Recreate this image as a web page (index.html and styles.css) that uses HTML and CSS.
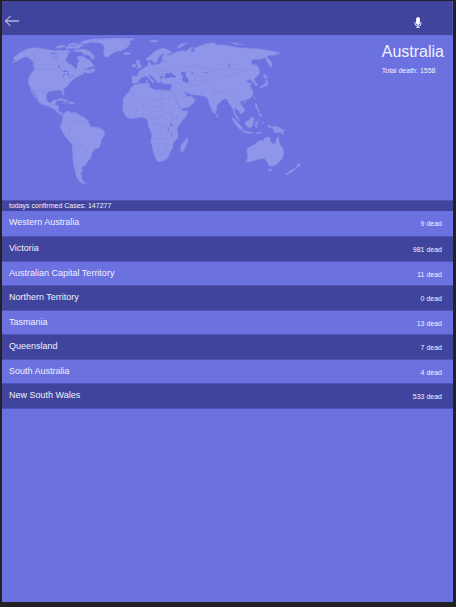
FILE: index.html
```html
<!DOCTYPE html>
<html lang="en">
<head>
<meta charset="utf-8">
<meta name="viewport" content="width=device-width, initial-scale=1">
<title>Australia</title>
<link rel="stylesheet" href="styles.css">
</head>
<body>
<div class="app">
  <header class="topbar">
    <a class="back" href="#" aria-label="Back">
      <svg width="16" height="12" viewBox="0 0 16 12"><path d="M15 6H1.500M6.500 1 1.500 6l5 5"/></svg>
    </a>
    <button class="mic" type="button" aria-label="Voice search">
      <svg width="8" height="12" viewBox="0 0 8 12"><rect class="mic-body" x="2.500" y="0.500" width="3" height="7" rx="1.500"/><path d="M1 5v1.200a3 3 0 0 0 6 0V5M4 9v2M2.500 10.500h3"/></svg>
    </button>
  </header>
  <main>
    <section class="hero">
      <svg class="map" viewBox="6 15 930 495" role="img" aria-label="World map">
        <g class="land">
          <!-- North America -->
          <path d="M40 82L52 74 62 66 85 56 100 53 130 56 150 60 165 62 180 60 195 64 205 72 200 84 204 100 222 108 228 120 232 110 232 100 240 86 238 78 250 80 262 88 270 92 276 100 283 108 270 112 255 116 250 122 262 118 266 120 283 122 280 127 264 130 256 126 248 132 236 138 226 144 214 152 207 162 198 172 190 178 192 196 187 192 184 180 165 182 150 184 142 188 138 200 141 214 148 219 156 217 160 211 170 210 168 218 163 224 176 228 174 240 180 247 190 250 184 255 174 249 166 240 156 234 146 229 130 225 118 218 112 206 104 190 97 176 100 190 107 204 101 198 94 184 92 174 86 164 85 150 90 136 98 124 104 118 100 108 100 96 92 88 80 80 66 84 52 92 36 98 46 90 40 86Z"/>
          <!-- Arctic islands -->
          <path d="M151 70l12-4 12 3 1 8-10 4-14-1-7-5zM168 50l16-5 14 2-12 6-17 2zM196 52l14-5 14 3-8 5-16 1zM187 63l12-3 13 3-6 5-15 1zM205 42l17-4 10 3-14 5-14 0zM219 51l11-7 14-2 9 3-10 4-8 6-13 1zM240 38l16-7 22-4 22-1-12 6-18 5-14 4zM220 61l16-3 18 0 14 5 8 8 8 8-3 9-10-2 1-7-12-5-9 0-4-8-14-1-14-2zM233 79l8 2 4 6-9 2-6-5zM270 119l9-4 6 4-1 5-10 1z"/>
          <!-- Caribbean -->
          <path d="M170 210l14-5 14 5 9 6-10-1-11-5-14 3zM206 217l9-1 10 4-9 2-10 0zM189 218l7 1-4 2z"/>
          <!-- Greenland and Iceland -->
          <path d="M290 28L320 26 350 24 404 26 388 34 390 42 380 54 362 62 346 66 332 74 322 82 312 78 310 66 314 56 308 42 296 38 276 38ZM371 69l9-2 9 1 4 3-8 3-12-1z"/>
          <!-- South America -->
          <path d="M188 256L196 246 206 243 212 248 228 248 238 256 252 262 264 272 268 282 272 290 290 292 306 298 315 306 312 318 304 330 301 346 296 354 284 358 276 368 272 384 262 396 258 404 250 408 244 412 248 420 242 428 244 438 246 450 252 456 260 461 248 460 238 454 230 442 226 426 220 400 218 370 216 342 206 332 194 316 186 302 180 292 184 280 188 270Z"/>
          <!-- Africa -->
          <path d="M403 164L419 161 441 160 450 162 448 172 462 178 472 182 477 178 493 181 512 182 524 204 532 220 541 236 549 243 564 242 560 256 548 270 536 286 531 298 534 312 533 324 522 336 518 342 517 356 510 366 504 382 495 391 480 395 471 394 466 382 459 362 456 346 452 334 456 318 452 302 444 288 444 272 436 264 420 261 405 265 391 266 379 260 370 245 368 233 370 218 369 208 378 194 388 184 392 174ZM562 323L564 334 557 348 551 364 543 364 541 354 545 342 554 334Z"/>
          <!-- British Isles -->
          <path d="M410 90l8 2 1 8 6 8-2 5-13 3 3-7-3-7zM399 103l7-1 1 7-7 4-4-4z"/>
          <!-- Europe and Asia -->
          <path d="M396 158L396 138 414 138 413 130 422 120 434 113 444 106 444 98 450 96 452 104 466 104 480 101 486 94 500 92 486 91 486 80 494 72 486 72 476 82 474 90 468 100 462 98 456 90 442 92 438 86 452 76 464 64 478 57 492 55 510 62 516 68 506 72 500 72 504 77 516 72 530 66 545 62 560 64 566 56 578 50 572 64 584 66 582 54 600 48 620 40 640 38 650 44 680 46 700 50 720 54 740 54 760 56 780 57 800 60 820 64 842 69 826 75 806 76 800 82 810 90 817 102 815 112 806 104 800 92 796 82 784 88 762 88 752 94 756 102 772 106 778 116 779 130 770 140 762 146 768 158 774 166 766 166 758 154 748 148 738 152 746 158 756 160 750 166 756 178 760 190 752 204 738 210 724 214 718 216 724 226 734 236 732 246 722 252 716 242 704 234 702 240 708 254 716 266 720 274 712 268 702 252 698 236 688 222 682 208 672 206 660 216 650 228 650 240 645 252 638 246 628 222 622 204 610 198 596 196 576 194 560 188 550 178 556 190 562 200 572 198 586 208 580 220 568 230 544 238 536 226 526 206 514 188 512 180 516 162 496 162 484 158 481 148 492 140 482 138 480 146 480 156 474 160 466 148 458 140 450 134 446 138 454 146 462 154 458 160 446 144 438 138 426 142 418 150 412 158 404 160Z"/>
          <path d="M447 34l15-3 15 1-7 3-14 2zM533 50l10-8 14-3 8 0-12 4-9 8-9 3zM693 39l12-1 14 4 10 2-16 0zM439 151l4 0 0 6-5 0zM456 157l7 0-3 3z"/>
          <!-- Japan, Philippines and Sri Lanka -->
          <path d="M792 132l8 6 5 4-8 3-7-5zM797 147l6 6 1 11-8 4-9 3-4 4-3-4 9-6 8-5zM761 202l4 0-2 6zM730 214l7 0-1 5-5-1zM765 220l5 1 2 13 5 4-3 3-7-7zM777 250l8 5 0 6-7-3zM773 241l6 3-3 5zM649 251l6 5-1 6-5-3z"/>
          <!-- Indonesia and New Guinea -->
          <path d="M695 262l8 4 12 13 10 12 1 8-7-1-11-13-9-13zM727 301l14 3 19 4-2 3-19-2-12-4zM736 275l9-3 10-11 7 3-1 12-4 12-6 5-9-3-6-7zM766 276l12-2-9 5 7 3-7 2 3 9-5-1-2-10zM767 309l14-2 5 2-16 2zM787 273l3 3-1 6-2-3zM801 287l10-1 4 6 11-4 14 5 6 7 6 14-13-7-7 2-11-3 0-9-12-4zM844 299l10-1-2 4-8 1z"/>
          <!-- Australia and New Zealand -->
          <path d="M738 396L744 382 740 362 742 354 756 348 768 340 774 334 784 330 790 332 794 324 804 321 812 324 810 334 820 342 826 340 830 324 834 320 838 334 840 344 848 354 852 368 848 384 838 396 828 406 816 408 806 406 802 396 794 386 784 386 770 390 758 392 750 396ZM806 417l10 0-3 6-5 1zM895 400l7 5-9 7-9 4 7-9zM882 415l3 4-13 9-13 6-3-2 15-10z"/>
        </g>
        <g class="islets">
          <path d="M859 299l7 5-2 2zM873 308l13 8-2 2-10-8zM888 336l3 5-3-1zM901 330l3 5-3-1zM891 350l7 3-5 1zM928 339l6-2 0 4-5 1zM148 283l4 1-3 1zM233 219l4 0-1 4zM264 451l9 0-3 2z"/>
        </g>
        <g class="water">
          <path d="M202 81l9-5 13 1 7 5-1 10 5 5-6 7-5 9-5-4-3-8-12-2-7-8zM174 104l5 1 1 9-5-2zM164 85l10 1 1 2-12-1zM151 69l16 1-1 3-15-1zM185 125l13-4 7 4-10 1zM192 129l3 1-4 10-3 0zM204 127l5 5-3 5-5-4zM206 143l9-4-1 3-7 3zM214 137l8-3-1 3-6 1z"/>
          <path d="M494 137l6-9 8 3 4-5 4 5 12 8-2 4-14-1-14 3-5-2zM543 127l11-2 5 5-3 8 9 10 1 8-9 3-8-6-3-8 5-5-7-6zM574 126l5-1 0 6-4-1zM610 128l14-2-1 2-12 2zM687 98l4 5-3 6-5 0 4-5zM511 280l7 1 0 6-7 2zM504 291l2 2 2 12-3-4zM514 306l3 4 1 12-3-5z"/>
        </g>
        <path class="borders" d="M104 118h82l14 3M122 56l-18 18v38M105 181l14 1 16 5 5 8M220 128l14-8M205 252l4 15 18 10 12 1M190 281l13 7 6 9-6 16 15 17 9-8 14 13 5 12 14 11M218 330l5 25 9-4 18 3 13 9-3 14M222 355l3 35 8 40M238 278l15 0 11-4M400 164v38l28 25 25-22 17 5 17-5h27M487 181v28l-4 20-29 4M400 202l-15 14M370 231h30l12 12M393 236l-8 20M428 228l-18 8-5 28M430 227l0 35M454 232l-7 18 9 20M483 229l10 18 20 0 8-14M493 247l-8 14-25 7M513 247l4 18 20-3M513 265l-3 19-15 4-20-8-21 5M510 284l20 16M470 280l10 13 0 35-21-3M453 340h44l16 8M480 320l14 8 20-10M474 340v30l12 7 14-16M490 341l10 20 13 3M504 287l-5 17 18 5"/>
        <path class="borders" d="M480 92l10 7 0 11 14 8-5 11M438 109l10 10-9 9 16 5M455 106l10 10 14-2 10 6-5 13M463 121l9 12 10 2-4 13M420 130l15 6M407 140l-1 18M489 120l15-2 16 5-5 8M533 118l7-10 24 2 26-7 18 9 16 1 11 9 14-5 19 1 14-6 19 6 20 2 12-6 13 9M635 118l-9 16-18 8 13 11-19 1-17-7-12 10M580 138l14-6 14 10M640 119l23 17 25 3 19-9 21-6M555 158l19 8 6 24M519 163l18-4 14 15M512 180l14 10 20-8M574 166l24-1 17-9 10 7-12 13-8 19M625 163l16 11 22 11 16-2M641 174l-3 8 24 9M679 184l6 15M694 185l8 15 6 12M701 205l13-6 8 6M709 211l14 10 4 10M829 290v17"/>
      </svg>
      <div class="summary">
        <h1>Australia</h1>
        <p>Total death: 1558</p>
      </div>
    </section>
    <p class="today">todays confirmed Cases: 147277</p>
    <table class="regions">
      <tbody>
        <tr><th scope="row">Western Australia</th><td>9 dead</td></tr>
        <tr><th scope="row">Victoria</th><td>981 dead</td></tr>
        <tr><th scope="row">Australian Capital Territory</th><td>11 dead</td></tr>
        <tr><th scope="row">Northern Territory</th><td>0 dead</td></tr>
        <tr><th scope="row">Tasmania</th><td>13 dead</td></tr>
        <tr><th scope="row">Queensland</th><td>7 dead</td></tr>
        <tr><th scope="row">South Australia</th><td>4 dead</td></tr>
        <tr><th scope="row">New South Wales</th><td>533 dead</td></tr>
      </tbody>
    </table>
  </main>
</div>
</body>
</html>
```
FILE: styles.css
```css
:root {
  --dark: #41449c;
  --light: #6b71df;
  --line: #5153b6;
  --text: #f0f1ff;
}

* {
  box-sizing: border-box;
}

body {
  display: flex;
  min-height: 100vh;
  margin: 0;
  padding: 1px 3px 5px 2px;
  background: #222224;
  color: var(--text);
  font-family: "Liberation Sans", Arial, sans-serif;
}

h1,
p {
  margin: 0;
  font-weight: 400;
}

.app {
  flex: 1;
  background: var(--light);
}

.topbar {
  display: flex;
  align-items: center;
  justify-content: space-between;
  height: 34px;
  padding: 6px 30px 0 2px;
  border-right: 1px solid var(--line);
  background: var(--dark);
}

.back,
.mic {
  display: flex;
  padding: 0;
  border: 0;
  background: none;
}

.mic {
  padding-top: 4px;
}

.topbar svg {
  fill: none;
  stroke: #e8eaff;
  stroke-width: 1;
}

.topbar .mic-body {
  fill: #ffffff;
}

.hero {
  display: flex;
  justify-content: space-between;
  align-items: flex-start;
  padding-right: 9px;
}

.map {
  flex: 0 1 310px;
  min-width: 0;
}

.land {
  fill: #8f95e8;
  stroke: #858be5;
  stroke-width: 2;
  stroke-linejoin: round;
}

.islets {
  fill: #7c82e3;
}

.water {
  fill: var(--light);
}

.borders {
  fill: none;
  stroke: #858be2;
  stroke-width: 2;
  stroke-linejoin: round;
}

.summary {
  padding-top: 7px;
}

.summary h1 {
  font-size: 16px;
  line-height: 20px;
}

.summary p {
  padding-top: 4px;
  font-size: 7px;
  line-height: 10px;
}

.today {
  padding-left: 7px;
  border-top: 1px solid var(--line);
  background: var(--dark);
  font-size: 7px;
  line-height: 10px;
}

.regions {
  width: 100%;
  border-collapse: separate;
  border-spacing: 0;
}

.regions tr {
  height: 24px;
}

.regions tr:first-child {
  height: 26px;
}

.regions tr:nth-child(even) {
  height: 25px;
  background: var(--dark);
}

.regions th,
.regions td {
  padding: 0 11px 0 7px;
  border-bottom: 1px solid var(--line);
  vertical-align: top;
  font-weight: 400;
}

.regions th {
  padding-top: 6px;
  font-size: 9px;
  line-height: 10px;
  text-align: left;
}

.regions td {
  padding-top: 8px;
  font-size: 7px;
  line-height: 10px;
  text-align: right;
}
```
